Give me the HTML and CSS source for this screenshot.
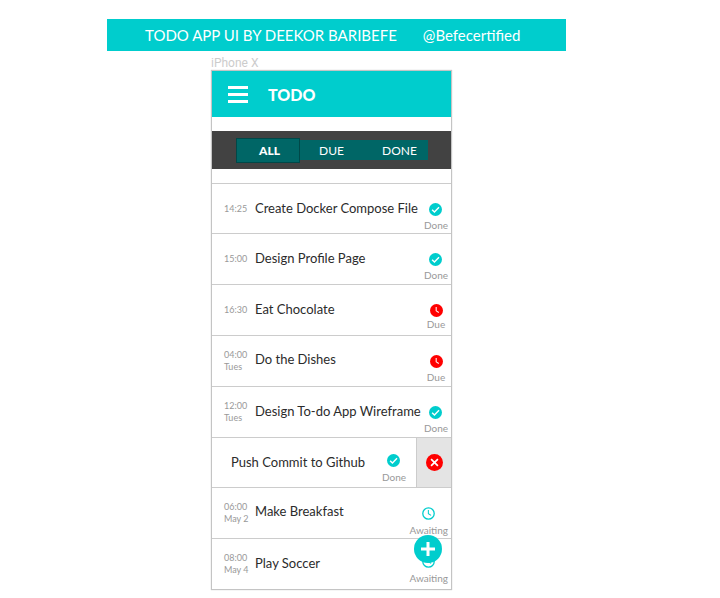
FILE: index.html
```
<!DOCTYPE html>
<html lang="en">
<head>
    <meta charset="UTF-8">
    <meta name="viewport" content="width=device-width, initial-scale=1.0">
    <title>Todo App UI</title>
    <link rel="stylesheet" href="styles.css">
</head>
<body>

<!-- Shared icons -->
<svg class="sprite" aria-hidden="true">
    <symbol id="check" viewBox="0 0 20 20">
        <circle cx="10" cy="10" r="10" fill="#00cdcd"/>
        <path d="M4.8 10.3l3.6 3.6 7-7.2" fill="none" stroke="#fff" stroke-width="2.2"/>
    </symbol>
    <symbol id="due" viewBox="0 0 20 20">
        <circle cx="10" cy="10" r="10" fill="#f00"/>
        <path d="M9.5 4.8v5.7l4 2.6" fill="none" stroke="#fff" stroke-width="1.6"/>
    </symbol>
    <symbol id="clock" viewBox="0 0 20 20">
        <circle cx="10" cy="10" r="8.8" fill="none" stroke="#00cdcd" stroke-width="2"/>
        <path d="M9.8 4.8v5.5l4.2 2.6" fill="none" stroke="#00cdcd" stroke-width="1.6"/>
    </symbol>
</svg>

<header class="banner">
    <span>TODO APP UI BY DEEKOR BARIBEFE</span>
    <span>@Befecertified</span>
</header>

<main class="device">
    <div class="device-name">iPhone X</div>
    <div class="phone">
        <div class="topbar">
            <button class="menu" aria-label="Menu"><i></i><i></i><i></i></button>
            <h1>TODO</h1>
        </div>

        <nav class="filters">
            <button class="tab active">ALL</button>
            <button class="tab">DUE</button>
            <button class="tab">DONE</button>
        </nav>

        <ul class="tasks">
            <li class="task short">
                <time>14:25</time>
                <span class="title">Create Docker Compose File</span>
                <span class="status"><svg class="icon"><use href="#check"/></svg>Done</span>
            </li>
            <li class="task">
                <time>15:00</time>
                <span class="title">Design Profile Page</span>
                <span class="status"><svg class="icon"><use href="#check"/></svg>Done</span>
            </li>
            <li class="task">
                <time>16:30</time>
                <span class="title">Eat Chocolate</span>
                <span class="status tight"><svg class="icon"><use href="#due"/></svg>Due</span>
            </li>
            <li class="task raised">
                <time>04:00<br>Tues</time>
                <span class="title">Do the Dishes</span>
                <span class="status"><svg class="icon"><use href="#due"/></svg>Due</span>
            </li>
            <li class="task">
                <time>12:00<br>Tues</time>
                <span class="title">Design To-do App Wireframe</span>
                <span class="status"><svg class="icon"><use href="#check"/></svg>Done</span>
            </li>
            <li class="task short swiped">
                <span class="title">Push Commit to Github</span>
                <span class="status high"><svg class="icon"><use href="#check"/></svg>Done</span>
                <button class="delete" aria-label="Delete">
                    <svg viewBox="0 0 20 20">
                        <circle cx="10" cy="10" r="10" fill="#f00"/>
                        <path d="M6 6l8 8M14 6l-8 8" stroke="#fff" stroke-width="2"/>
                    </svg>
                </button>
            </li>
            <li class="task raised">
                <time>06:00<br>May 2</time>
                <span class="title">Make Breakfast</span>
                <span class="status loose"><svg class="icon"><use href="#clock"/></svg>Awaiting</span>
            </li>
            <li class="task">
                <time>08:00<br>May 4</time>
                <span class="title">Play Soccer</span>
                <span class="status high"><svg class="icon"><use href="#clock"/></svg>Awaiting</span>
            </li>
        </ul>

        <button class="add" aria-label="Add task">
            <svg viewBox="0 0 14 14"><path d="M7 0v14M0 7h14" stroke="#fff" stroke-width="3"/></svg>
        </button>
    </div>
</main>

</body>
</html>
```
FILE: styles.css
```
* {
    box-sizing: border-box;
}

body {
    margin: 0;
    padding: 19px 107px 7px;
    background: #fff;
    color: #2b2b2b;
    font-family: "Gill Sans", Lato, sans-serif;
}

button {
    padding: 0;
    border: none;
    background: none;
    color: #fff;
    font: inherit;
    cursor: pointer;
}

.sprite {
    position: absolute;
    width: 0;
    height: 0;
}

/* Title banner */
.banner {
    display: flex;
    gap: 26px;
    max-width: 459px;
    padding: 0 38px;
    background: #00cdcd;
    color: #fff;
    font-size: 15px;
    line-height: 32px;
    white-space: nowrap;
}

/* Phone frame */
.device {
    max-width: 241px;
    margin-left: 104px;
}

.device-name {
    padding-top: 5px;
    color: #ccc;
    font-family: Roboto, sans-serif;
    font-size: 12px;
    line-height: 14px;
}

.phone {
    position: relative;
    border: 1px solid #c4c4c4;
    box-shadow: 0 0 1px #c4c4c4;
}

.topbar {
    display: flex;
    align-items: center;
    gap: 20px;
    height: 46px;
    padding: 1px 16px 0;
    background: #00cdcd;
}

.topbar h1 {
    margin: 0;
    color: #fff;
    font-size: 16px;
    font-weight: 900;
    line-height: 18px;
}

.menu {
    display: flex;
    flex-direction: column;
    gap: 4px;
    width: 20px;
}

.menu i {
    height: 3px;
    background: #fff;
}

/* Filter tabs */
.filters {
    display: flex;
    align-items: center;
    justify-content: center;
    height: 38px;
    margin: 14px 0;
    background: #424242;
}

.tab {
    width: 64px;
    height: 20px;
    background: #006666;
    font-size: 12px;
}

.tab:last-child {
    padding-left: 8px;
}

.tab.active {
    height: 25px;
    padding-left: 4px;
    border: 1px solid #004848;
    font-weight: 900;
}

/* Task list */
.tasks {
    margin: 0;
    padding: 0;
    list-style: none;
}

.task {
    display: flex;
    align-items: center;
    height: 51px;
    padding: 0 3px 0 12px;
    border-top: 1px solid #ccc;
}

.task.short {
    height: 50px;
}

.task time {
    flex: none;
    width: 31px;
    color: #999;
    font-size: 9px;
    line-height: 12px;
}

.title {
    flex: 1;
    min-width: 0;
    padding-bottom: 2px;
    font-size: 13px;
    line-height: 18px;
    white-space: nowrap;
}

.raised .title {
    padding-bottom: 5px;
}

.status {
    display: flex;
    flex: none;
    flex-direction: column;
    align-items: center;
    align-self: flex-start;
    gap: 3px;
    min-width: 24px;
    padding-top: 19px;
    color: #999;
    font-size: 10px;
    line-height: 12px;
}

.status.tight {
    gap: 1px;
}

.status.loose {
    gap: 4px;
}

.status.high {
    gap: 4px;
    padding-top: 16px;
}

.icon {
    width: 13px;
    height: 13px;
}

/* Row pulled left to show the delete button */
.task.swiped {
    padding: 0 0 0 19px;
}

.swiped .status {
    margin-right: 10px;
}

.delete {
    display: flex;
    align-items: center;
    justify-content: center;
    width: 35px;
    height: 100%;
    border-left: 1px solid #ccc;
    background: #e4e4e4;
}

.delete svg {
    width: 17px;
    height: 17px;
}

.add {
    position: absolute;
    right: 9px;
    bottom: 26px;
    display: flex;
    align-items: center;
    justify-content: center;
    width: 28px;
    height: 28px;
    border-radius: 50%;
    background: #00cdcd;
}

.add svg {
    width: 14px;
    height: 14px;
}
```
